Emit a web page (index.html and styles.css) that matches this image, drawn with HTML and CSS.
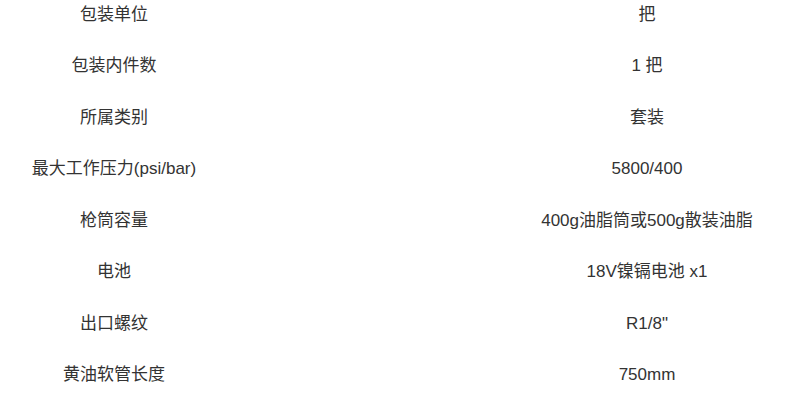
FILE: index.html
```html
<!DOCTYPE html>
<html lang="zh-CN">
<head>
<meta charset="utf-8">
<title>产品参数</title>
<link rel="stylesheet" href="styles.css">
</head>
<body>
<div class="spec">
  <div class="key">包装单位</div><div class="val">把</div>
  <div class="key">包装内件数</div><div class="val">1 把</div>
  <div class="key">所属类别</div><div class="val">套装</div>
  <div class="key">最大工作压力(psi/bar)</div><div class="val">5800/400</div>
  <div class="key">枪筒容量</div><div class="val">400g油脂筒或500g散装油脂</div>
  <div class="key">电池</div><div class="val">18V镍镉电池 x1</div>
  <div class="key">出口螺纹</div><div class="val">R1/8"</div>
  <div class="key">黄油软管长度</div><div class="val">750mm</div>
</div>
</body>
</html>
```
FILE: styles.css
```css
html, body {
  margin: 0;
  padding: 0;
  background: #fff;
  overflow: hidden;
}
body {
  width: 800px;
  height: 404px;
}
.spec {
  display: grid;
  grid-template-columns: 228px 572px;
  grid-auto-rows: 51.43px;
  align-items: center;
  margin-top: -10.7px;
  font-family: "Liberation Sans", "Noto Sans CJK SC", sans-serif;
  font-size: 17px;
  line-height: 24px;
  color: #333;
}
.key, .val {
  text-align: center;
  white-space: nowrap;
}
.val {
  padding-left: 266px;
}
```
